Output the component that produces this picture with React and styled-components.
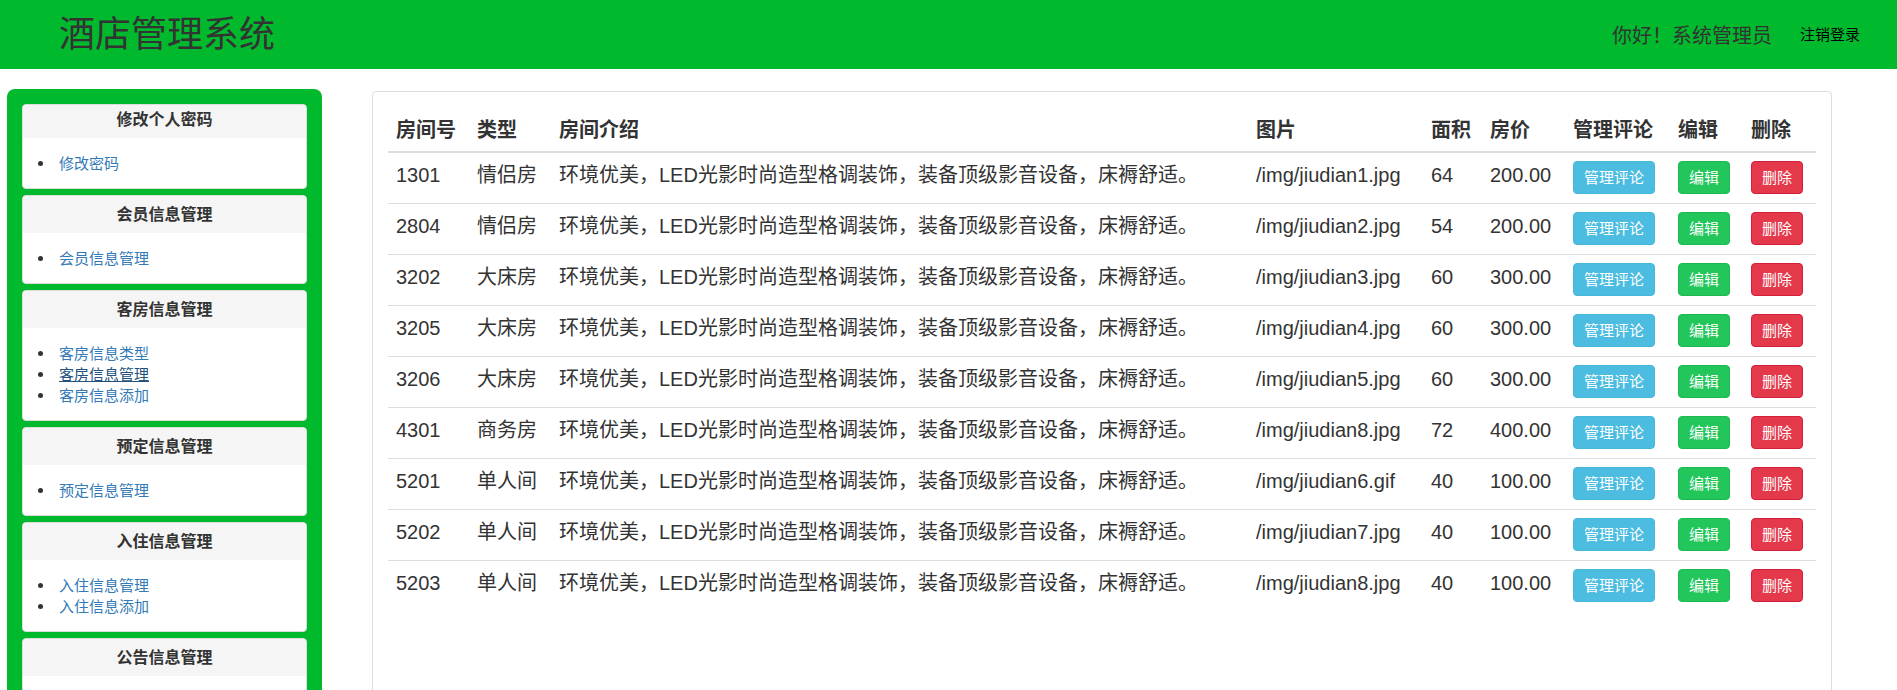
import styled, { createGlobalStyle, css } from "styled-components"

const GREEN = "#00b92d"

const GlobalStyle = createGlobalStyle`
  html, body {
    margin: 0;
    height: 100%;
    overflow: hidden;
  }
  body {
    font-family: "Liberation Sans", "Noto Sans CJK SC", sans-serif;
    color: #333;
    background: #fff;
  }
  * { box-sizing: border-box; }
`

const menus = [
  { title: "修改个人密码", links: ["修改密码"] },
  { title: "会员信息管理", links: ["会员信息管理"] },
  { title: "客房信息管理", links: ["客房信息类型", "客房信息管理", "客房信息添加"], active: 1 },
  { title: "预定信息管理", links: ["预定信息管理"] },
  { title: "入住信息管理", links: ["入住信息管理", "入住信息添加"] },
  { title: "公告信息管理", links: ["公告信息管理", "公告信息添加"] },
]

const desc = "环境优美，LED光影时尚造型格调装饰，装备顶级影音设备，床褥舒适。"

const rooms = [
  ["1301", "情侣房", "/img/jiudian1.jpg", "64", "200.00"],
  ["2804", "情侣房", "/img/jiudian2.jpg", "54", "200.00"],
  ["3202", "大床房", "/img/jiudian3.jpg", "60", "300.00"],
  ["3205", "大床房", "/img/jiudian4.jpg", "60", "300.00"],
  ["3206", "大床房", "/img/jiudian5.jpg", "60", "300.00"],
  ["4301", "商务房", "/img/jiudian8.jpg", "72", "400.00"],
  ["5201", "单人间", "/img/jiudian6.gif", "40", "100.00"],
  ["5202", "单人间", "/img/jiudian7.jpg", "40", "100.00"],
  ["5203", "单人间", "/img/jiudian8.jpg", "40", "100.00"],
]

const columns = [
  { label: "房间号", width: 81 },
  { label: "类型", width: 82 },
  { label: "房间介绍", width: 697 },
  { label: "图片", width: 175 },
  { label: "面积", width: 59 },
  { label: "房价", width: 83 },
  { label: "管理评论", width: 105 },
  { label: "编辑", width: 73 },
  { label: "删除", width: 73 },
]

export default function App() {
  return (
    <Page>
      <GlobalStyle />
      <TopBar>
        <Title>酒店管理系统</Title>
        <Greeting>你好！系统管理员</Greeting>
        <Logout href="#">注销登录</Logout>
      </TopBar>

      <Main>
        <Sidebar>
          {menus.map(menu => (
            <MenuPanel key={menu.title}>
              <MenuHeading>{menu.title}</MenuHeading>
              <MenuList>
                {menu.links.map((link, i) => (
                  <MenuItem key={link}>
                    <MenuLink href="#" $active={menu.active === i}>{link}</MenuLink>
                  </MenuItem>
                ))}
              </MenuList>
            </MenuPanel>
          ))}
        </Sidebar>

        <ContentPanel>
          <Table>
            <colgroup>
              {columns.map(col => <col key={col.label} style={{ width: col.width }} />)}
            </colgroup>
            <thead>
              <tr>
                {columns.map(col => <Th key={col.label}>{col.label}</Th>)}
              </tr>
            </thead>
            <tbody>
              {rooms.map(([no, type, img, area, price]) => (
                <tr key={no}>
                  <Td>{no}</Td>
                  <Td>{type}</Td>
                  <Td>{desc}</Td>
                  <Td>{img}</Td>
                  <Td>{area}</Td>
                  <Td>{price}</Td>
                  <Td $action><Button $variant="info">管理评论</Button></Td>
                  <Td $action><Button $variant="success">编辑</Button></Td>
                  <Td $action><Button $variant="danger">删除</Button></Td>
                </tr>
              ))}
            </tbody>
          </Table>
        </ContentPanel>
      </Main>
    </Page>
  )
}

const Page = styled.div`
  height: 100vh;
  overflow: hidden;
`

const TopBar = styled.header`
  display: flex;
  align-items: center;
  height: 69px;
  padding: 0 37px 0 59px;
  background: ${GREEN};
`

const Title = styled.h1`
  flex: 1;
  margin: 0;
  font-size: 36px;
  font-weight: normal;
  line-height: 1;
  color: #333;
  padding-top: 1px;
`

const Greeting = styled.span`
  font-size: 20px;
  color: #333;
  margin-right: 28px;
`

const Logout = styled.a`
  font-size: 15px;
  color: #000;
  text-decoration: none;
  margin-bottom: 3px;
`

const Main = styled.div`
  display: flex;
  align-items: flex-start;
`

const Sidebar = styled.aside`
  display: flex;
  flex-direction: column;
  gap: 6px;
  width: 315px;
  margin: 20px 0 0 7px;
  padding: 15px 15px 40px;
  background: ${GREEN};
  border-radius: 8px;
`

const MenuHeading = styled.div`
  padding: 10px 15px;
  background: #f5f5f5;
  text-align: center;
  font-size: 16px;
  font-weight: bold;
  line-height: 17px;
  color: #333;
`

const MenuPanel = styled.section`
  background: #fff;
  border: 1px solid #ddd;
  border-radius: 4px;
  overflow: hidden;

  &:first-child ${MenuHeading} {
    padding-top: 6px;
  }
`

const MenuList = styled.ul`
  margin: 0;
  padding: 15px 15px 14px;
  list-style: none;
`

const MenuItem = styled.li`
  display: flex;
  align-items: center;
  font-size: 15px;
  line-height: 21px;

  &::before {
    content: "";
    width: 5px;
    height: 5px;
    border-radius: 50%;
    background: #333;
    margin-right: 16px;
  }
`

const MenuLink = styled.a`
  color: #337ab7;
  text-decoration: none;

  ${p => p.$active && css`
    color: #23527c;
    text-decoration: underline;
  `}
`

const ContentPanel = styled.div`
  width: 1460px;
  min-height: 700px;
  margin: 22px 0 0 50px;
  padding: 17px 15px;
  border: 1px solid #ddd;
  border-radius: 4px;
  background: #fff;
`

const Table = styled.table`
  width: 100%;
  table-layout: fixed;
  border-collapse: collapse;
  font-size: 20px;
  color: #333;
`

const Th = styled.th`
  padding: 8px;
  line-height: 26px;
  text-align: left;
  font-weight: bold;
  white-space: nowrap;
  border-bottom: 2px solid #ddd;
`

const Td = styled.td`
  height: 51px;
  padding: ${p => (p.$action ? "0 8px 1px" : "0 8px 5px")};
  line-height: 33px;
  white-space: nowrap;
  vertical-align: middle;
  border-top: 1px solid #ddd;
`

const variants = {
  info: css`
    background: #4cbde0;
    border-color: #46b8da;
  `,
  success: css`
    background: #22c65b;
    border-color: #1db852;
  `,
  danger: css`
    background: #e4394b;
    border-color: #d41f3a;
  `,
}

const Button = styled.button`
  display: block;
  height: 33px;
  padding: 0 10px;
  border: 1px solid transparent;
  border-radius: 4px;
  color: #fff;
  font-family: inherit;
  font-size: 15px;
  line-height: 31px;
  cursor: pointer;
  ${p => variants[p.$variant]}
`
